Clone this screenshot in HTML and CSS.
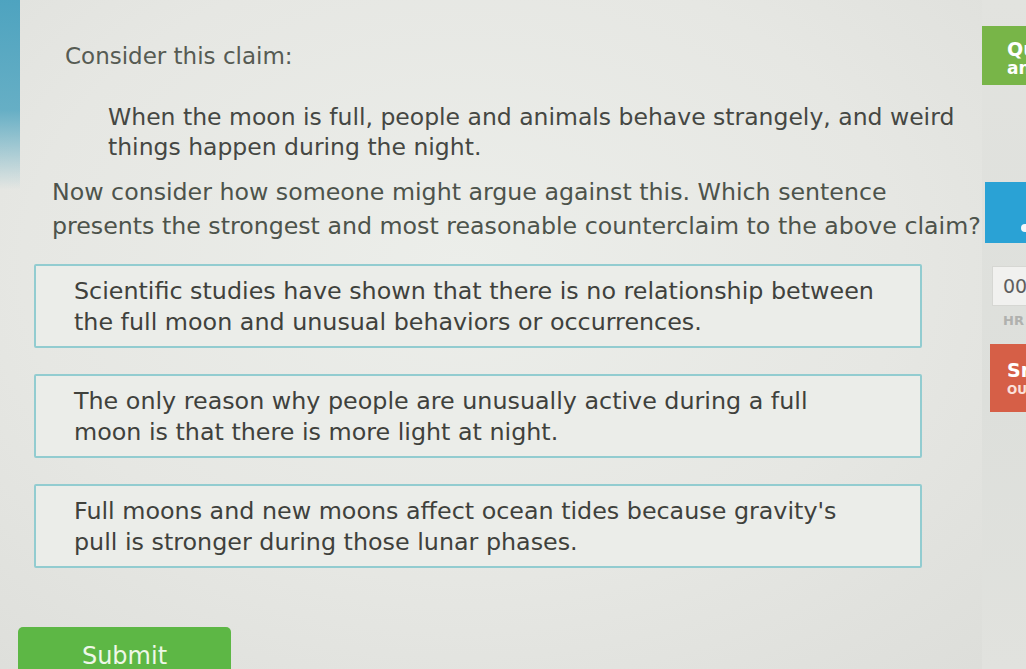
FILE: index.html
```html
<!DOCTYPE html>
<html lang="en">
<head>
<meta charset="utf-8">
<title>Counterclaim question</title>
<link rel="stylesheet" href="styles.css">
</head>
<body>
<div class="screen">
  <main class="content">
    <h2 class="prompt">Consider this claim:</h2>
    <p class="claim">When the moon is full, people and animals behave strangely, and weird<br>things happen during the night.</p>
    <p class="question">Now consider how someone might argue against this. Which sentence<br>presents the strongest and most reasonable counterclaim to the above claim?</p>
    <div class="options">
      <div class="option">Scientific studies have shown that there is no relationship between<br>the full moon and unusual behaviors or occurrences.</div>
      <div class="option">The only reason why people are unusually active during a full<br>moon is that there is more light at night.</div>
      <div class="option">Full moons and new moons affect ocean tides because gravity's<br>pull is stronger during those lunar phases.</div>
    </div>
    <button class="submit">Submit</button>
  </main>
  <aside class="side">
    <div class="answered"><span class="big">Questions</span><span class="small">answered</span></div>
    <div class="progress"><span class="dot"></span></div>
    <div class="timer">00</div>
    <div class="timer-label">HR</div>
    <div class="score"><span class="big">SmartScore</span><span class="small">OUT OF 100</span></div>
  </aside>
</div>
</body>
</html>
```

FILE: styles.css
```css
html, body {
  margin: 0;
  padding: 0;
}

body {
  background: #e5e6e2;
  font-family: "DejaVu Sans", Verdana, sans-serif;
}

.screen {
  display: flex;
  width: 1026px;
  height: 669px;
  overflow: hidden;
  background:
    linear-gradient(to bottom, rgba(70, 160, 190, 0.95) 0, rgba(80, 165, 192, 0.85) 110px, rgba(90, 170, 195, 0) 190px) left top / 20px 100% no-repeat,
    radial-gradient(ellipse at 45% 40%, #eceeea 0, #e6e7e3 55%, #dcddd9 100%);
}

.content {
  width: 982px;
  flex: none;
  padding-top: 42px;
  box-sizing: border-box;
  color: #4b4d48;
}

.prompt {
  margin: 0 0 0 65px;
  font-size: 23px;
  line-height: 28px;
  font-weight: normal;
  color: #565b53;
}

.claim {
  margin: 32px 0 0 108px;
  font-size: 23.5px;
  line-height: 30px;
  color: #454743;
}

.question {
  margin: 13px 0 0 52px;
  font-size: 23.7px;
  line-height: 34px;
  color: #4d534b;
}

.options {
  display: flex;
  flex-direction: column;
  gap: 26px;
  margin: 21px 0 0 34px;
  width: 888px;
}

.option {
  border: 2px solid #92ccd0;
  border-radius: 2px;
  background: #ebede9;
  padding: 10px 30px 8px 38px;
  font-size: 23.8px;
  line-height: 31px;
  color: #3f413c;
  white-space: nowrap;
}

.submit {
  display: block;
  margin: 59px 0 0 18px;
  width: 213px;
  padding: 14px 0 16px;
  border: none;
  border-radius: 5px;
  background: #5db745;
  color: #eef7e8;
  font-family: "DejaVu Sans", Verdana, sans-serif;
  font-size: 24px;
  line-height: 30px;
  text-align: center;
}

.side {
  flex: 1;
  display: flex;
  flex-direction: column;
  padding-top: 26px;
  overflow: hidden;
  white-space: nowrap;
  background: linear-gradient(to bottom, #e2e3df 0, #dddfdb 60%, #e1e2de 100%);
}

.answered {
  display: flex;
  flex-direction: column;
  background: #78b548;
  color: #fff;
  height: 59px;
  padding: 13px 0 0 25px;
  box-sizing: border-box;
}

.big {
  font-weight: bold;
  font-size: 19px;
  line-height: 20px;
}

.small {
  font-size: 17px;
  line-height: 18px;
  font-weight: bold;
}

.progress {
  margin: 97px 0 0 3px;
  height: 61px;
  background: #2aa2d5;
  position: relative;
}

.dot {
  position: absolute;
  left: 36px;
  bottom: 11px;
  width: 8px;
  height: 8px;
  border-radius: 50%;
  background: #f4f8fb;
}

.timer {
  margin: 23px 0 0 10px;
  height: 38px;
  background: #f1f1ef;
  border: 1px solid #d6d7d3;
  border-right: none;
  color: #5e5e5e;
  font-size: 19px;
  line-height: 38px;
  padding-left: 10px;
}

.timer-label {
  margin: 7px 0 0 21px;
  font-size: 13px;
  line-height: 16px;
  color: #b0b1ae;
  font-weight: bold;
}

.score {
  display: flex;
  flex-direction: column;
  margin: 15px 0 0 8px;
  height: 68px;
  background: #d65f47;
  color: #fff;
  padding: 15px 0 0 17px;
  box-sizing: border-box;
}

.score .big {
  font-size: 19px;
  line-height: 22px;
}

.score .small {
  font-size: 12px;
  line-height: 18px;
  color: #fbe1db;
}
```
